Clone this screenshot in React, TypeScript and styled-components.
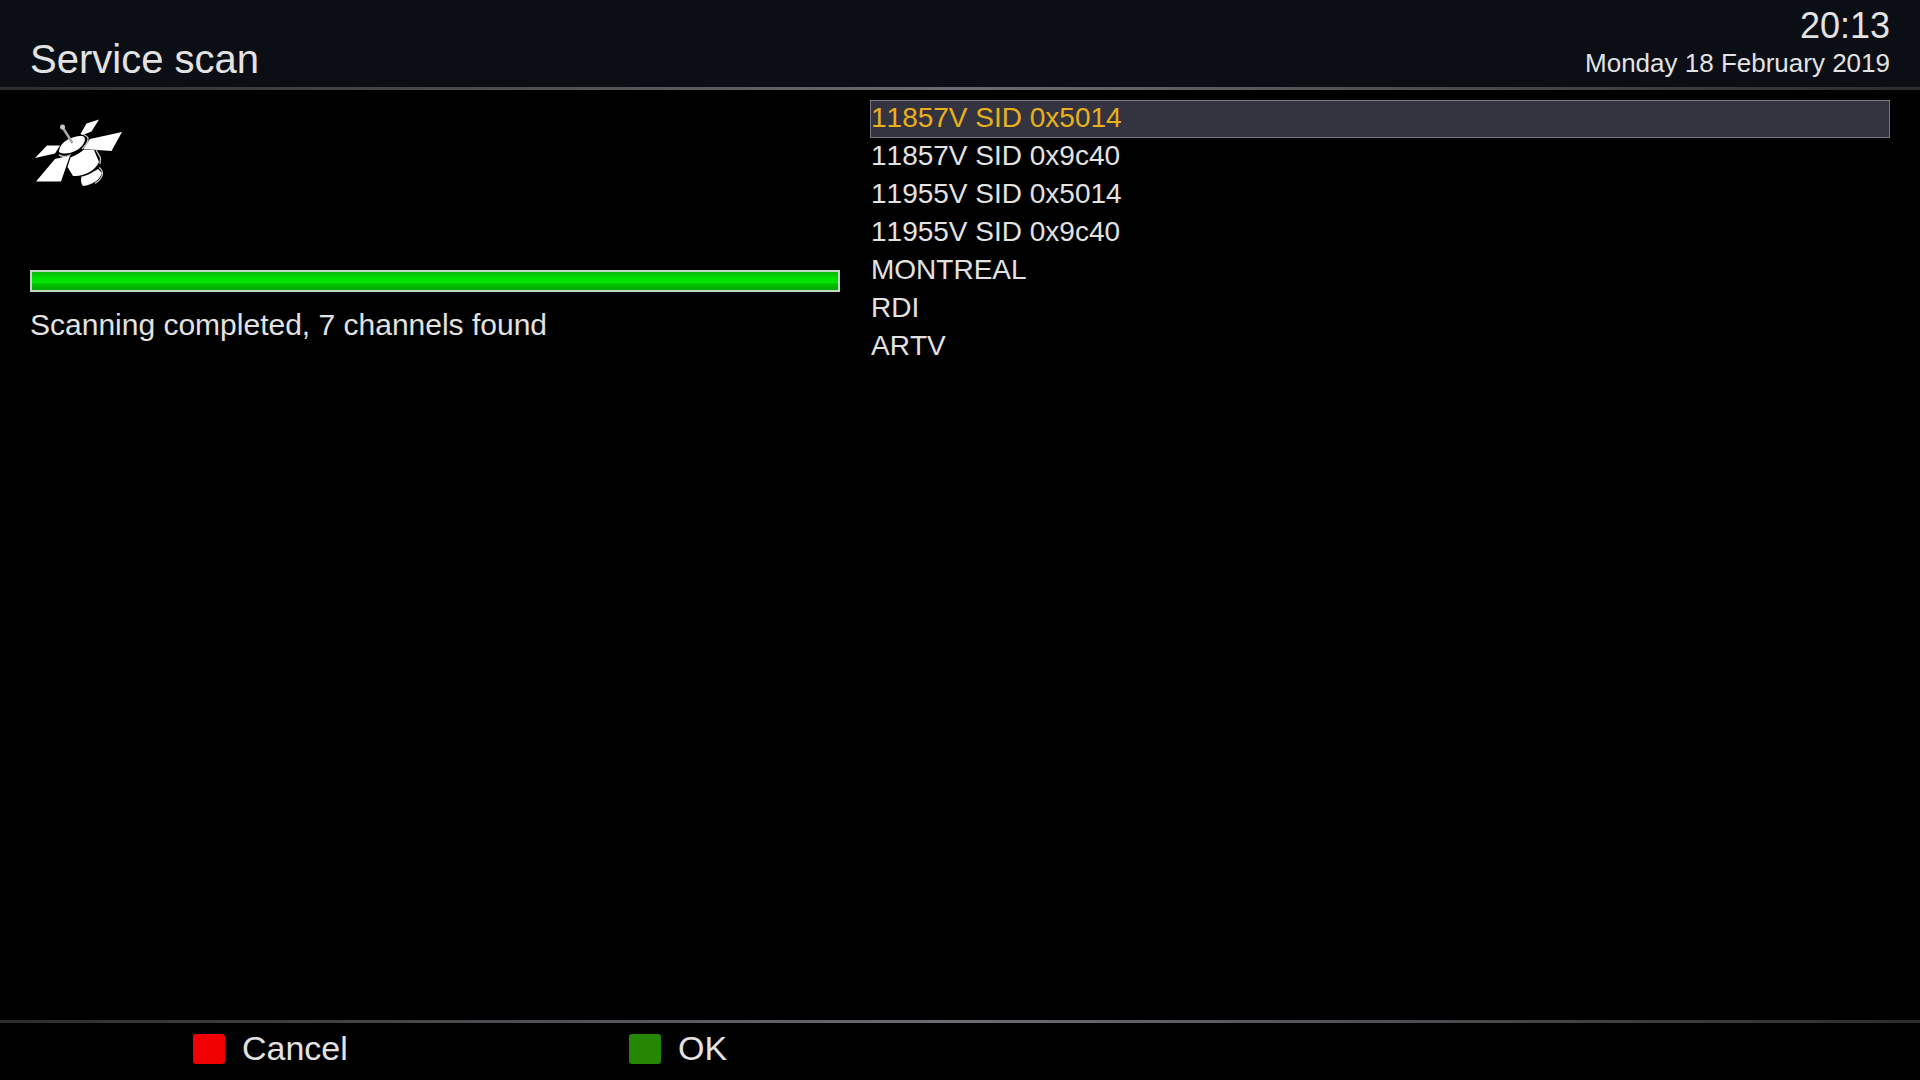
import React, { useState } from "react";
import styled, { createGlobalStyle } from "styled-components";

const GlobalStyle = createGlobalStyle`
  * { box-sizing: border-box; }
  body {
    margin: 0;
    background: #000;
    color: #e2e2e2;
    font-family: "Liberation Sans", Arial, sans-serif;
  }
`;

const Screen = styled.div`
  display: flex;
  flex-direction: column;
  min-height: 100vh;
`;

const Rule = styled.div<{ $edge: string; $middle: string }>`
  height: 3px;
  background: linear-gradient(90deg, ${(p) => p.$edge}, ${(p) => p.$middle} 50%, ${(p) => p.$edge});
`;

const Header = styled.header`
  display: flex;
  justify-content: space-between;
  align-items: flex-end;
  padding: 4px 30px;
  background: #0b0e15;
`;

const Title = styled.h1`
  margin: 0;
  font-size: 40px;
  font-weight: 400;
  line-height: 48px;
`;

const Clock = styled.div`
  display: flex;
  flex-direction: column;
  align-items: flex-end;
`;

const Time = styled.time`
  font-size: 36px;
  line-height: 43px;
`;

const DateText = styled.time`
  padding-bottom: 4px;
  font-size: 26px;
  line-height: 32px;
`;

const Main = styled.main`
  flex: 1;
  display: grid;
  grid-template-columns: 27fr 34fr;
  align-items: start;
  gap: 30px;
  padding: 10px 30px;
`;

const ScanPanel = styled.section`
  display: flex;
  flex-direction: column;
`;

const SatelliteIcon = styled.svg`
  width: 100px;
  height: 90px;
  margin: 10px 0 70px;
`;

const barFill = "linear-gradient(#0cb80c, #00e000 35%, #00e600 55%, #0ade0a 60%, #00c400 66%, #05a805)";

const ScanProgress = styled.progress`
  appearance: none;
  display: block;
  width: 100%;
  height: 22px;
  border: 2px solid #c4d6c4;
  background: #000;
  &::-webkit-progress-bar { background: #000; }
  &::-webkit-progress-value { background: ${barFill}; }
`;

const Status = styled.label`
  margin-top: 15px;
  font-size: 30px;
  line-height: 36px;
`;

const ChannelList = styled.ul`
  margin: 0;
  padding: 0;
  list-style: none;
`;

const Channel = styled.button<{ $selected: boolean }>`
  display: block;
  width: 100%;
  height: 38px;
  padding: 0 0 2px;
  border: 1px solid ${(p) => (p.$selected ? "#77777d" : "transparent")};
  background: ${(p) => (p.$selected ? "#343440" : "transparent")};
  color: ${(p) => (p.$selected ? "#e9b01c" : "inherit")};
  font: 28px/34px "Liberation Sans", Arial, sans-serif;
  font-kerning: none;
  text-align: left;
  outline: none;
`;

const Footer = styled.footer`
  display: grid;
  grid-template-columns: repeat(4, 1fr);
  padding: 4px 0 10px 176px;
`;

const KeyButton = styled.button`
  display: flex;
  align-items: center;
  gap: 17px;
  padding: 0 17px;
  border: 0;
  background: none;
  color: inherit;
  font: 34px/43px "Liberation Sans", Arial, sans-serif;
`;

const KeyColor = styled.span<{ $color: string }>`
  width: 32px;
  height: 30px;
  border-radius: 3px;
  background: ${(p) => p.$color};
`;

const channels = [
  "11857V SID 0x5014",
  "11857V SID 0x9c40",
  "11955V SID 0x5014",
  "11955V SID 0x9c40",
  "MONTREAL",
  "RDI",
  "ARTV",
];

function Satellite() {
  return (
    <SatelliteIcon viewBox="30 110 100 90" aria-hidden="true">
      <g fill="#fff">
        <path d="M35 158 L47 145.500 L60 145.500 L55 153.500 Z" />
        <path d="M36 181.500 L55 159 L70 155.500 L61 181.500 Z" />
        <path d="M80.500 134 L86.500 123.500 L99 119.500 L91.500 131.500 L83 135 Z" />
        <path d="M83.500 149 L90 139 L122 132 L111.500 151 Z" />
        <path d="M59 152 C59 143 70 136 82 136 C88 137 84 146 77 150 C70 154 63 154.500 59 152 Z" />
        <path d="M70.500 157.500 C77 155 81 152 84 149.500 L94 150 L99 162 C95 171 83 177 73 176 L67.500 167 Z" />
        <path d="M81.500 176.500 C87 176 93 172 98 169 L102 173 C100 180 92 185 83 186 C80.500 183 81 179 81.500 176.500 Z" />
      </g>
      <g fill="none" stroke="#c4c4c4" strokeWidth="1.300">
        <path d="M84 135 C91 137 88 143 82 149" />
        <path d="M59 154.500 C62 157.500 66 157 71 154.500" />
        <path d="M95.500 149 L100.500 158 L100 164" />
        <path d="M99 167.500 C105 172 103 178 95 183.500" />
      </g>
      <path d="M63 128 L72.500 143" stroke="#a8a8a8" strokeWidth="2.500" />
      <circle cx="62.500" cy="127" r="2.500" fill="#c8c8c8" />
    </SatelliteIcon>
  );
}

export default function App() {
  const [selected, setSelected] = useState(0);
  return (
    <>
      <GlobalStyle />
      <Screen>
        <Header>
          <Title>Service scan</Title>
          <Clock>
            <Time dateTime="20:13">20:13</Time>
            <DateText dateTime="2019-02-18">Monday 18 February 2019</DateText>
          </Clock>
        </Header>
        <Rule $edge="#2c2c2c" $middle="#6c6c72" />
        <Main>
          <ScanPanel>
            <Satellite />
            <ScanProgress id="scan" max={100} value={100} />
            <Status htmlFor="scan">Scanning completed, 7 channels found</Status>
          </ScanPanel>
          <ChannelList>
            {channels.map((name, i) => (
              <li key={name}>
                <Channel type="button" $selected={i === selected} onClick={() => setSelected(i)}>
                  {name}
                </Channel>
              </li>
            ))}
          </ChannelList>
        </Main>
        <Rule $edge="#2c2c2e" $middle="#6c6c72" />
        <Footer>
          <KeyButton type="button">
            <KeyColor $color="#f00000" />
            Cancel
          </KeyButton>
          <KeyButton type="button">
            <KeyColor $color="#258604" />
            OK
          </KeyButton>
        </Footer>
      </Screen>
    </>
  );
}
